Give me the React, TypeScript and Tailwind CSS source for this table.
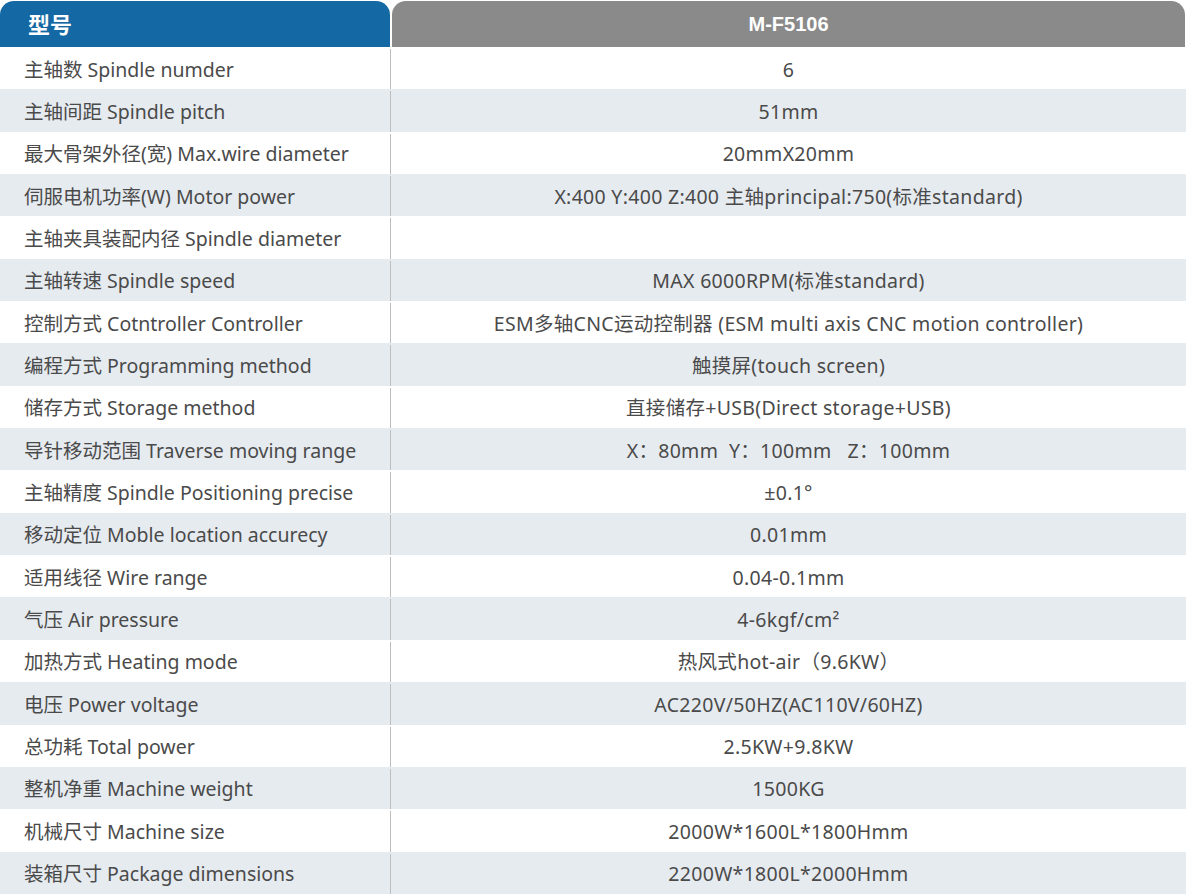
import React from "react";

const rows: [string, string][] = [
  ["主轴数 Spindle numder", "6"],
  ["主轴间距 Spindle pitch", "51mm"],
  ["最大骨架外径(宽) Max.wire diameter", "20mmX20mm"],
  ["伺服电机功率(W) Motor power", "X:400 Y:400 Z:400 主轴principal:750(标准standard)"],
  ["主轴夹具装配内径 Spindle diameter", ""],
  ["主轴转速 Spindle speed", "MAX 6000RPM(标准standard)"],
  ["控制方式 Cotntroller Controller", "ESM多轴CNC运动控制器 (ESM multi axis CNC motion controller)"],
  ["编程方式 Programming method", "触摸屏(touch screen)"],
  ["储存方式 Storage method", "直接储存+USB(Direct storage+USB)"],
  ["导针移动范围 Traverse moving range", "X：80mm  Y：100mm   Z：100mm"],
  ["主轴精度 Spindle Positioning precise", "±0.1°"],
  ["移动定位 Moble location accurecy", "0.01mm"],
  ["适用线径 Wire range", "0.04-0.1mm"],
  ["气压 Air pressure", "4-6kgf/cm²"],
  ["加热方式 Heating mode", "热风式hot-air（9.6KW）"],
  ["电压 Power voltage", "AC220V/50HZ(AC110V/60HZ)"],
  ["总功耗 Total power", "2.5KW+9.8KW"],
  ["整机净重 Machine weight", "1500KG"],
  ["机械尺寸 Machine size", "2000W*1600L*1800Hmm"],
  ["装箱尺寸 Package dimensions", "2200W*1800L*2000Hmm"],
];

export default function App() {
  return (
    <div
      className="w-[1186px] h-[895px] bg-white pt-px text-[#4a4a4a] text-[19.5px]"
      style={{ fontFamily: '"Noto Sans", "Noto Sans CJK SC", sans-serif' }}
    >
      <div className="flex h-[46px] gap-[2px]">
        <div className="w-[390px] bg-[#1468a3] rounded-t-[14px] flex items-center pl-[28px] text-white text-[22px] font-bold">
          型号
        </div>
        <div
          className="flex-1 mr-px bg-[#8a8a8a] rounded-t-[14px] flex items-center justify-center text-white text-[20px] font-bold"
          style={{ fontFamily: '"Liberation Sans", Arial, sans-serif' }}
        >
          M-F5106
        </div>
      </div>
      <div className="flex flex-col">
        {rows.map(([label, value], i) => (
          <div
            key={i}
            className={`flex h-[42.35px] items-center pt-[2px] ${i % 2 === 1 ? "bg-[#e6ebf0]" : "bg-white"}`}
          >
            <div className="w-[391px] h-full flex items-center pl-[24px] border-r border-[#bdbdbd] whitespace-nowrap">
              {label}
            </div>
            <div className="flex-1 h-full flex items-center justify-center whitespace-pre tracking-[0.3px]">
              {value}
            </div>
          </div>
        ))}
      </div>
    </div>
  );
}
